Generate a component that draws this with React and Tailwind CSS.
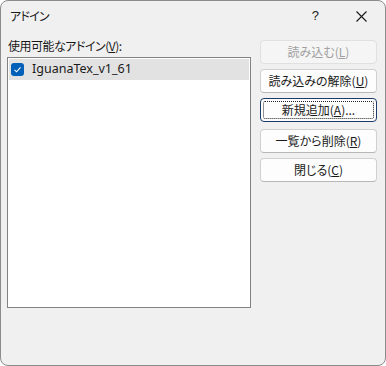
const jp = "font-['Yu_Gothic_UI','Noto_Sans_CJK_JP',sans-serif] [font-feature-settings:'palt']";

function Btn({ children, disabled, focused, className = "" }) {
  return (
    <button
      className={`relative w-[117px] h-[24px] rounded-[4px] border text-[12px] flex items-center justify-center ${
        disabled
          ? "bg-[#f5f5f5] border-[#e0e0e0] text-[#a0a0a0]"
          : focused
          ? "bg-[#fdfdfd] border-[#1c3b6a] text-[#1a1a1a]"
          : "bg-[#fdfdfd] border-[#d0d0d0] border-b-[#b8b8b8] text-[#1a1a1a]"
      } ${className}`}
    >
      {focused && (
        <span className="absolute inset-[2px] border border-dotted border-[#222] rounded-[2px]" />
      )}
      <span className="relative">{children}</span>
    </button>
  );
}

export default function App() {
  return (
    <div className={`w-[386px] h-[366px] bg-[#f0f0f0] border border-[#8c8c8c] rounded-[8px] flex flex-col overflow-hidden ${jp}`}>
      {/* Title bar */}
      <div className="h-[30px] flex items-center pl-[9px] text-[12px] text-[#1a1a1a]">
        <span className="tracking-[-0.8px]">アドイン</span>
        <span className="ml-auto mr-[37px] text-[13px] font-['Liberation_Sans',sans-serif]">?</span>
        <svg width="11" height="11" viewBox="0 0 11 11" className="mr-[18px]">
          <path d="M0.5 0.5 L10.5 10.5 M10.5 0.5 L0.5 10.5" stroke="#1a1a1a" strokeWidth="1.1" />
        </svg>
      </div>

      {/* Body */}
      <div className="flex pl-[6px] pr-[8px]">
        <div className="flex flex-col">
          <div className="h-[26px] pt-[7px] pl-[1px] text-[12px] text-[#1a1a1a] leading-[16px] tracking-[-0.5px]">
            使用可能なアドイン(<span className="underline">V</span>):
          </div>
          <div className="w-[244px] h-[251px] bg-white border border-[#828282] p-[1px]">
            <div className="h-[21px] bg-[#e2e2e2] flex items-center pl-[2px]">
              <span className="w-[13px] h-[13px] rounded-[3px] bg-[#005fb8] flex items-center justify-center">
                <svg width="9" height="9" viewBox="0 0 9 9">
                  <path d="M1.5 4.8 L3.6 6.8 L7.5 2.3" fill="none" stroke="white" strokeWidth="1.1" />
                </svg>
              </span>
              <span className="ml-[8px] text-[12.5px] text-[#1a1a1a] font-['Noto_Sans',sans-serif]">IguanaTex_v1_61</span>
            </div>
          </div>
        </div>

        <div className="ml-auto flex flex-col pt-[9px]">
          <Btn disabled>読み込む(<span className="underline">L</span>)</Btn>
          <Btn className="mt-[5px]">読み込みの解除(<span className="underline">U</span>)</Btn>
          <Btn focused className="mt-[5px]">新規追加(<span className="underline">A</span>)...</Btn>
          <Btn className="mt-[7px]">一覧から削除(<span className="underline">R</span>)</Btn>
          <Btn className="mt-[5px]">閉じる(<span className="underline">C</span>)</Btn>
        </div>
      </div>
    </div>
  );
}
